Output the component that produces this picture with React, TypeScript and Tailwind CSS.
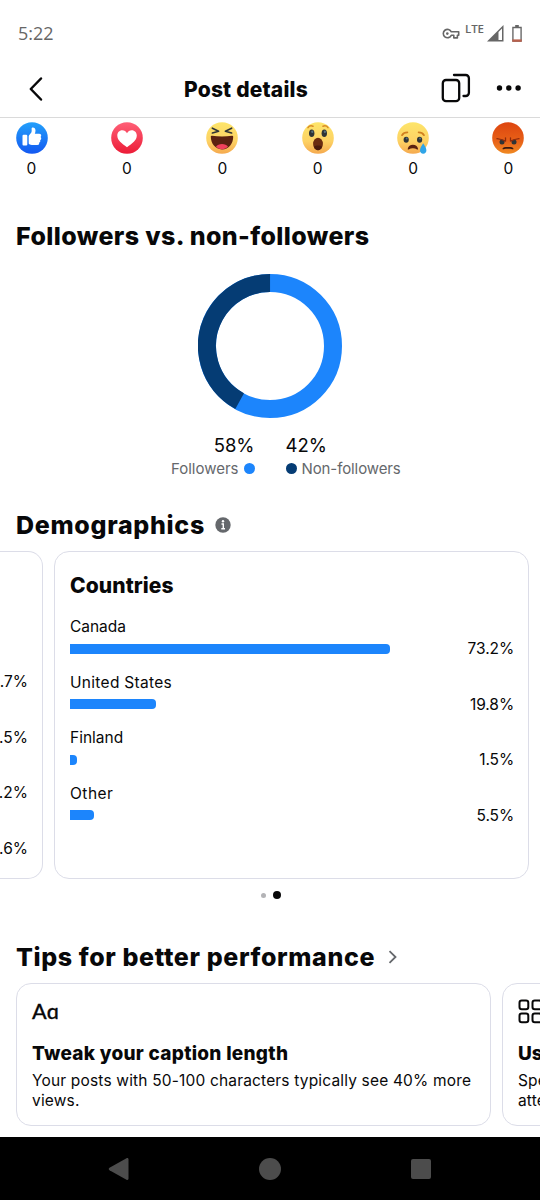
import type { ReactNode } from "react";

const countries = [
  { name: "Canada", value: 73.2, track: "tracking-[-0.05px]" },
  { name: "United States", value: 19.8, track: "tracking-[0.3px]" },
  { name: "Finland", value: 1.5, track: "tracking-[0px]" },
  { name: "Other", value: 5.5, track: "tracking-[0.5px]" },
];

const previousValues = [".7%", ".5%", ".2%", ".6%"];

function YellowFace({ id, children }: { id: string; children: ReactNode }) {
  return (
    <svg viewBox="0 0 32 32" className="size-8">
      <defs>
        <linearGradient id={id} x1="0" y1="0" x2="0" y2="1">
          <stop offset="0" stopColor="#fde56a" />
          <stop offset="0.6" stopColor="#fdd264" />
          <stop offset="1" stopColor="#f5a94e" />
        </linearGradient>
      </defs>
      <circle cx="16" cy="16" r="15.8" fill={`url(#${id})`} />
      {children}
    </svg>
  );
}

function Like() {
  return (
    <svg viewBox="0 0 32 32" className="size-8">
      <defs>
        <linearGradient id="like" x1="0" y1="0" x2="0" y2="1">
          <stop offset="0" stopColor="#23a0fb" />
          <stop offset="1" stopColor="#1358f1" />
        </linearGradient>
      </defs>
      <circle cx="16" cy="16" r="15.8" fill="url(#like)" />
      <g fill="#fff" transform="translate(-0.5 -0.6)">
        <rect x="7" y="13.4" width="4.8" height="10.8" rx="1.1" />
        <path d="M13.2 15.2c0-.9.4-1.5 1-2.1 1.3-1.2 2-2.200 2-3.900l-.1-2c0-.8.6-1.200 1.300-1.200 1.500 0 2.600 1.100 2.600 3 0 1.300-.3 2.200-.7 3.300h4.400c1.300 0 2 .8 2 1.800 0 .7-.3 1.200-.8 1.500.7.4.9 1 .8 1.700-.1.7-.5 1.200-1.100 1.400.3.5.3 1 .1 1.600-.2.5-.6.8-1.100 1 .4 1.300-.3 2.300-1.800 2.300h-4.300c-1.600 0-3-.4-4-1.100-.3-.2-.3-.5-.3-.9z" />
      </g>
    </svg>
  );
}

function Love() {
  return (
    <svg viewBox="0 0 32 32" className="size-8">
      <defs>
        <linearGradient id="love" x1="0" y1="0" x2="0" y2="1">
          <stop offset="0" stopColor="#ff6077" />
          <stop offset="1" stopColor="#ec1c37" />
        </linearGradient>
      </defs>
      <circle cx="16" cy="16" r="15.8" fill="url(#love)" />
      <path
        d="M16 11.3c-1-1.9-2.7-3-4.7-3-3 0-5 2.300-5 5.200 0 5 4.400 7.700 9.700 11.800 5.300-4.100 9.800-6.800 9.800-11.800 0-2.900-2.100-5.200-5.100-5.200-2 0-3.700 1.100-4.700 3z"
        fill="#fff"
      />
    </svg>
  );
}

function Haha() {
  return (
    <YellowFace id="haha">
      <path d="M4.8 14.6c0-.7.5-.9 1.200-.8 6.500.8 13.500.8 20 0 .8-.1 1.200.2 1.200.9 0 7-4.500 12.700-11.200 12.700S4.800 21.700 4.800 14.600z" fill="#5c2210" />
      <path d="M10 24.6c1.200-1.900 3.500-2.700 6-2.700s4.800.8 6 2.700c-1.600 1.700-3.700 2.800-6 2.800s-4.400-1.100-6-2.800z" fill="#f0425c" />
      <path
        d="M6.400 6.200l6.200 3-6.200 1.800M25.600 6.200l-6.200 3 6.200 1.800"
        fill="none"
        stroke="#2f3436"
        strokeWidth="1.7"
        strokeLinecap="round"
        strokeLinejoin="round"
      />
    </YellowFace>
  );
}

function Wow() {
  return (
    <YellowFace id="wow">
      <ellipse cx="16" cy="22" rx="4.9" ry="6.2" fill="#6b2c10" />
      <path d="M11.9 24.8c1-.9 2.500-1.400 4.100-1.400s3.100.5 4.100 1.400c-.9 2-2.400 3.400-4.100 3.400s-3.200-1.400-4.100-3.400z" fill="#4a1a0c" />
      <ellipse cx="9.7" cy="11.2" rx="2.7" ry="3.8" fill="#2f3436" />
      <ellipse cx="22.3" cy="11.2" rx="2.7" ry="3.8" fill="#2f3436" />
      <ellipse cx="10.3" cy="9.8" rx="1.1" ry="1.3" fill="#57707e" />
      <ellipse cx="22.9" cy="9.8" rx="1.1" ry="1.3" fill="#57707e" />
      <path d="M6 5.600c1.100-1.600 3-2.100 5-1.400M21 4.200c2-.7 3.900-.2 5 1.400" fill="none" stroke="#d98a24" strokeWidth="1.5" strokeLinecap="round" />
    </YellowFace>
  );
}

function Sad() {
  return (
    <YellowFace id="sad">
      <path d="M10.7 27c.6-2.800 2.600-4.200 5.200-4.200s4.600 1.400 5.200 4.200c.1.600-.5.800-1 .4-2.500-1.700-5.900-1.700-8.400 0-.5.4-1.100.2-1-.4z" fill="#5a2110" />
      <ellipse cx="9.2" cy="17.7" rx="2.6" ry="3" fill="#2f3436" />
      <ellipse cx="22.6" cy="17.7" rx="2.6" ry="3" fill="#2f3436" />
      <circle cx="9.7" cy="16.6" r="1" fill="#57707e" />
      <circle cx="23.1" cy="16.6" r="1" fill="#57707e" />
      <path d="M5 13.200c1-1.700 3-2.900 5.400-2.900M21.600 10.300c2.400 0 4.400 1.200 5.400 2.900" fill="none" stroke="#d0801f" strokeWidth="1.7" strokeLinecap="round" />
      <path d="M26.200 21.200c1.700 2.700 3.200 4.900 3.200 7.100 0 2-1.400 3.400-3.200 3.400s-3.200-1.400-3.200-3.400c0-2.200 1.500-4.400 3.200-7.100z" fill="#2fa5e8" />
    </YellowFace>
  );
}

function Angry() {
  return (
    <svg viewBox="0 0 32 32" className="size-8">
      <defs>
        <linearGradient id="angry" x1="0" y1="0" x2="0" y2="1">
          <stop offset="0" stopColor="#dd450f" />
          <stop offset="0.6" stopColor="#e86118" />
          <stop offset="1" stopColor="#f08a22" />
        </linearGradient>
      </defs>
      <circle cx="16" cy="16" r="15.8" fill="url(#angry)" />
      <ellipse cx="10" cy="19.9" rx="2.5" ry="2.5" fill="#2f3436" />
      <ellipse cx="22" cy="19.9" rx="2.5" ry="2.5" fill="#2f3436" />
      <path d="M5 16.600c2.500.3 5.700 1.200 8.500 2.500M13.500 18.800v-3M27 16.600c-2.500.3-5.700 1.200-8.500 2.500M18.500 18.800v-3" fill="none" stroke="#8e2a0c" strokeWidth="1.3" strokeLinecap="round" />
      <path d="M10.500 26.700c0-1.300 2.400-1.700 5.500-1.700s5.500.4 5.500 1.700c0 .6-.5.7-1.200.5-2.600-.5-6-.5-8.600 0-.7.2-1.200.1-1.200-.5z" fill="#3a1a12" />
    </svg>
  );
}

function StatusIcons() {
  return (
    <div className="flex items-center text-[#666]">
      <svg viewBox="0 0 18 12" className="mt-px h-3 w-[18px]" fill="none" stroke="currentColor" strokeWidth="1.6">
        <path d="M9.300 3.800h7.400v3.400h-1.300v2.700h-3.600V7.300H9.300A4.200 4.200 0 1 1 9.300 3.800z" strokeLinejoin="round" />
        <circle cx="5.3" cy="5.6" r="1.3" fill="currentColor" stroke="none" />
      </svg>
      <span className="mb-[9px] ml-[5px] w-[19px] font-['Open_Sans'] text-[11.5px] leading-none font-semibold tracking-[-0.1px]">LTE</span>
      <svg viewBox="0 0 17 17" className="ml-[3px] size-[17px]">
        <path d="M0 16.500L16.500 0v16.500z" fill="#666" />
        <path d="M11.500 7l3.500-3.500V15h-3.500z" fill="#fff" />
      </svg>
      <svg viewBox="0 0 11 17" className="ml-[8px] h-[17px] w-[10px]" preserveAspectRatio="none">
        <path d="M3.500 0h4v2h-4z" fill="#666" />
        <path d="M1 2.500h9v13.500H1z" fill="none" stroke="#666" strokeWidth="1.5" />
        <path d="M.3 14.400h10.400v2.400H.3z" fill="#b9604c" />
      </svg>
    </div>
  );
}

const reactions = [<Like />, <Love />, <Haha />, <Wow />, <Sad />, <Angry />];

export default function App() {
  return (
    <div className="flex h-[1200px] w-[540px] flex-col overflow-hidden bg-white font-['Inter',sans-serif] text-[#080809]">
      <div className="flex h-[62px] items-center justify-between px-[18px] pt-[5px]">
        <span className="font-['Open_Sans'] text-[18px] text-[#666]">5:22</span>
        <StatusIcons />
      </div>

      <header className="flex h-14 items-center border-b border-[#dadada] pr-[18px] pl-[28px]">
        <svg viewBox="0 0 16 26" className="-mt-[2px] h-[26px] w-4" fill="none" stroke="#080809" strokeWidth="2.5" strokeLinecap="round" strokeLinejoin="round">
          <path d="M13 2.500L2.800 13 13 23.500" />
        </svg>
        <h1 className="ml-[140px] text-[21px] font-extrabold tracking-[0.2px]">Post details</h1>
        <div className="-mt-[3px] ml-auto flex items-center gap-[25px]">
          <svg viewBox="0 0 30 30" className="size-[30px]" fill="none" stroke="#080809" strokeWidth="2.3" strokeLinecap="round">
            <rect x="1.8" y="7" width="16.4" height="21.2" rx="3.2" />
            <path d="M13 2h11.700a3.200 3.200 0 0 1 3.200 3.200v14.600a3.200 3.200 0 0 1-3.200 3.200h-2.200" />
          </svg>
          <svg viewBox="0 0 26 6" className="h-[6px] w-[26px]" fill="#080809">
            <circle cx="3.5" cy="3" r="2.7" />
            <circle cx="12.8" cy="3" r="2.7" />
            <circle cx="22.1" cy="3" r="2.7" />
          </svg>
        </div>
      </header>

      <main className="flex flex-1 flex-col">
        <div className="flex h-[62px] justify-between pt-1 pr-[15.5px] pl-[15.5px]">
          {reactions.map((icon, i) => (
            <div key={i} className="flex w-8 flex-col items-center">
              {icon}
              <span className="mt-1 text-[15.5px] leading-[21px]">0</span>
            </div>
          ))}
        </div>

        <h2 className="mt-10 pl-4 text-[25px] leading-8 font-extrabold tracking-[0.38px]">Followers vs. non-followers</h2>

        <svg viewBox="0 0 144 144" className="mx-auto mt-[22px] size-36 shrink-0" fill="none" strokeWidth="18">
          <circle cx="72" cy="72" r="63" stroke="#1c85fc" />
          <circle cx="72" cy="72" r="63" stroke="#053c74" pathLength="100" strokeDasharray="42 58" transform="rotate(118.8 72 72)" />
        </svg>

        <div className="mt-[15px] flex">
          <div className="flex w-[254.5px] flex-col items-end">
            <span className="text-[18.5px] leading-[25px]">58%</span>
            <span className="flex items-center gap-[5px] text-[15px] leading-[21px] text-[#65686c]">
              Followers
              <span className="size-[11px] rounded-full bg-[#1c85fc]" />
            </span>
          </div>
          <div className="ml-[31px] flex flex-col">
            <span className="text-[18.5px] leading-[25px]">42%</span>
            <span className="flex items-center gap-[5px] text-[15px] leading-[21px] tracking-[-0.1px] text-[#65686c]">
              <span className="size-[11px] rounded-full bg-[#053c74]" />
              Non-followers
            </span>
          </div>
        </div>

        <div className="mt-[30px] flex h-8 items-center pl-4">
          <h2 className="text-[25px] leading-8 font-extrabold tracking-[0.7px]">Demographics</h2>
          <svg viewBox="0 0 16 16" className="ml-[10px] size-4">
            <circle cx="8" cy="8" r="7.7" fill="#65686c" />
            <circle cx="8" cy="4.3" r="1.2" fill="#fff" />
            <path d="M6.500 7h1.800v4.500M6.300 11.700h3.700" fill="none" stroke="#fff" strokeWidth="1.4" />
          </svg>
        </div>

        <div className="mt-[10px] flex h-[328px] gap-[11px]">
          <div className="flex w-[43px] shrink-0 flex-col items-end rounded-r-[15px] border border-l-0 border-[#dcdde8] pt-[117px] pr-[14px] text-[15.5px]">
            {previousValues.map((value) => (
              <div key={value} className="h-[55.5px] shrink-0 leading-[25px]">{value}</div>
            ))}
          </div>
          <div className="w-[475px] shrink-0 rounded-[15px] border border-[#dcdde8] pt-5 pr-[14px] pl-[15px]">
            <h3 className="text-[21px] leading-7 font-extrabold tracking-[0.1px]">Countries</h3>
            <div className="mt-[15px]">
              {countries.map((country) => (
                <div key={country.name} className="h-[55.5px] text-[15.5px]">
                  <div className={`leading-[23px] ${country.track}`}>{country.name}</div>
                  <div className="flex h-[21px] items-center justify-between">
                    <div className="h-[10px] rounded-r-[4px] bg-[#1c85fc]" style={{ width: country.value * 4.365 }} />
                    <span className="leading-[23px] tracking-[-0.1px]">{country.value}%</span>
                  </div>
                </div>
              ))}
            </div>
          </div>
        </div>

        <div className="mt-[12px] flex h-2 items-center justify-center gap-[7px] pl-px">
          <span className="size-[5px] rounded-full bg-[#b3b3b6]" />
          <span className="size-2 rounded-full bg-[#080809]" />
        </div>

        <div className="mt-[42px] flex h-8 items-center pl-4">
          <h2 className="text-[25px] leading-8 font-extrabold tracking-[0.62px]">Tips for better performance</h2>
          <svg viewBox="0 0 10 14" className="ml-[13px] h-[14px] w-[10px]" fill="none" stroke="#65686c" strokeWidth="1.8">
            <path d="M1.500 1.200L7.500 7l-6 5.800" />
          </svg>
        </div>

        <div className="mt-[10px] flex h-[143px] gap-[11px] pl-4">
          <div className="w-[475px] shrink-0 rounded-[15px] border border-[#dcdde8] px-[15px] pt-[14px]">
            <div className="h-7 font-['Lato'] text-[21.5px] leading-[26px] font-medium [-webkit-text-stroke:0.3px]">Aɑ</div>
            <h3 className="mt-[15px] text-[19px] leading-[25px] font-extrabold tracking-[0.28px]">Tweak your caption length</h3>
            <p className="mt-[5px] text-[15.5px] leading-5 tracking-[0.17px]">Your posts with 50-100 characters typically see 40% more views.</p>
          </div>
          <div className="w-[475px] shrink-0 rounded-[15px] border border-[#dcdde8] px-[15px] pt-[14px]">
            <div className="flex h-7 items-start">
              <svg viewBox="0 0 26 26" className="mt-px size-[26px]" fill="none" stroke="#080809" strokeWidth="2">
                <rect x="1.5" y="1.5" width="8.8" height="8.8" rx="2.3" />
                <rect x="14.5" y="1.5" width="8.8" height="8.8" rx="2.3" />
                <rect x="1.5" y="14.5" width="8.8" height="8.8" rx="2.3" />
                <rect x="14.5" y="14.5" width="8.8" height="8.8" rx="2.3" />
              </svg>
            </div>
            <h3 className="mt-[15px] text-[19px] leading-[25px] font-extrabold">Use</h3>
            <p className="mt-[5px] text-[15.5px] leading-5 tracking-[0.17px]">
              Spe
              <br />
              atte
            </p>
          </div>
        </div>
      </main>

      <nav className="flex h-[63px] shrink-0 items-center justify-between bg-black pr-[109px] pl-[107px]">
        <svg viewBox="0 0 22 24" className="h-6 w-[22px]" fill="#4c4c4c">
          <path d="M19.500 1.300L2.500 10.700c-1 .6-1 1.800 0 2.500l17 9.500c1.200.6 2-.1 2-1.200v-19c0-1.100-.8-1.800-2-1.200z" />
        </svg>
        <div className="size-[22px] rounded-full bg-[#4c4c4c]" />
        <div className="size-5 rounded-[2px] bg-[#4c4c4c]" />
      </nav>
    </div>
  );
}
